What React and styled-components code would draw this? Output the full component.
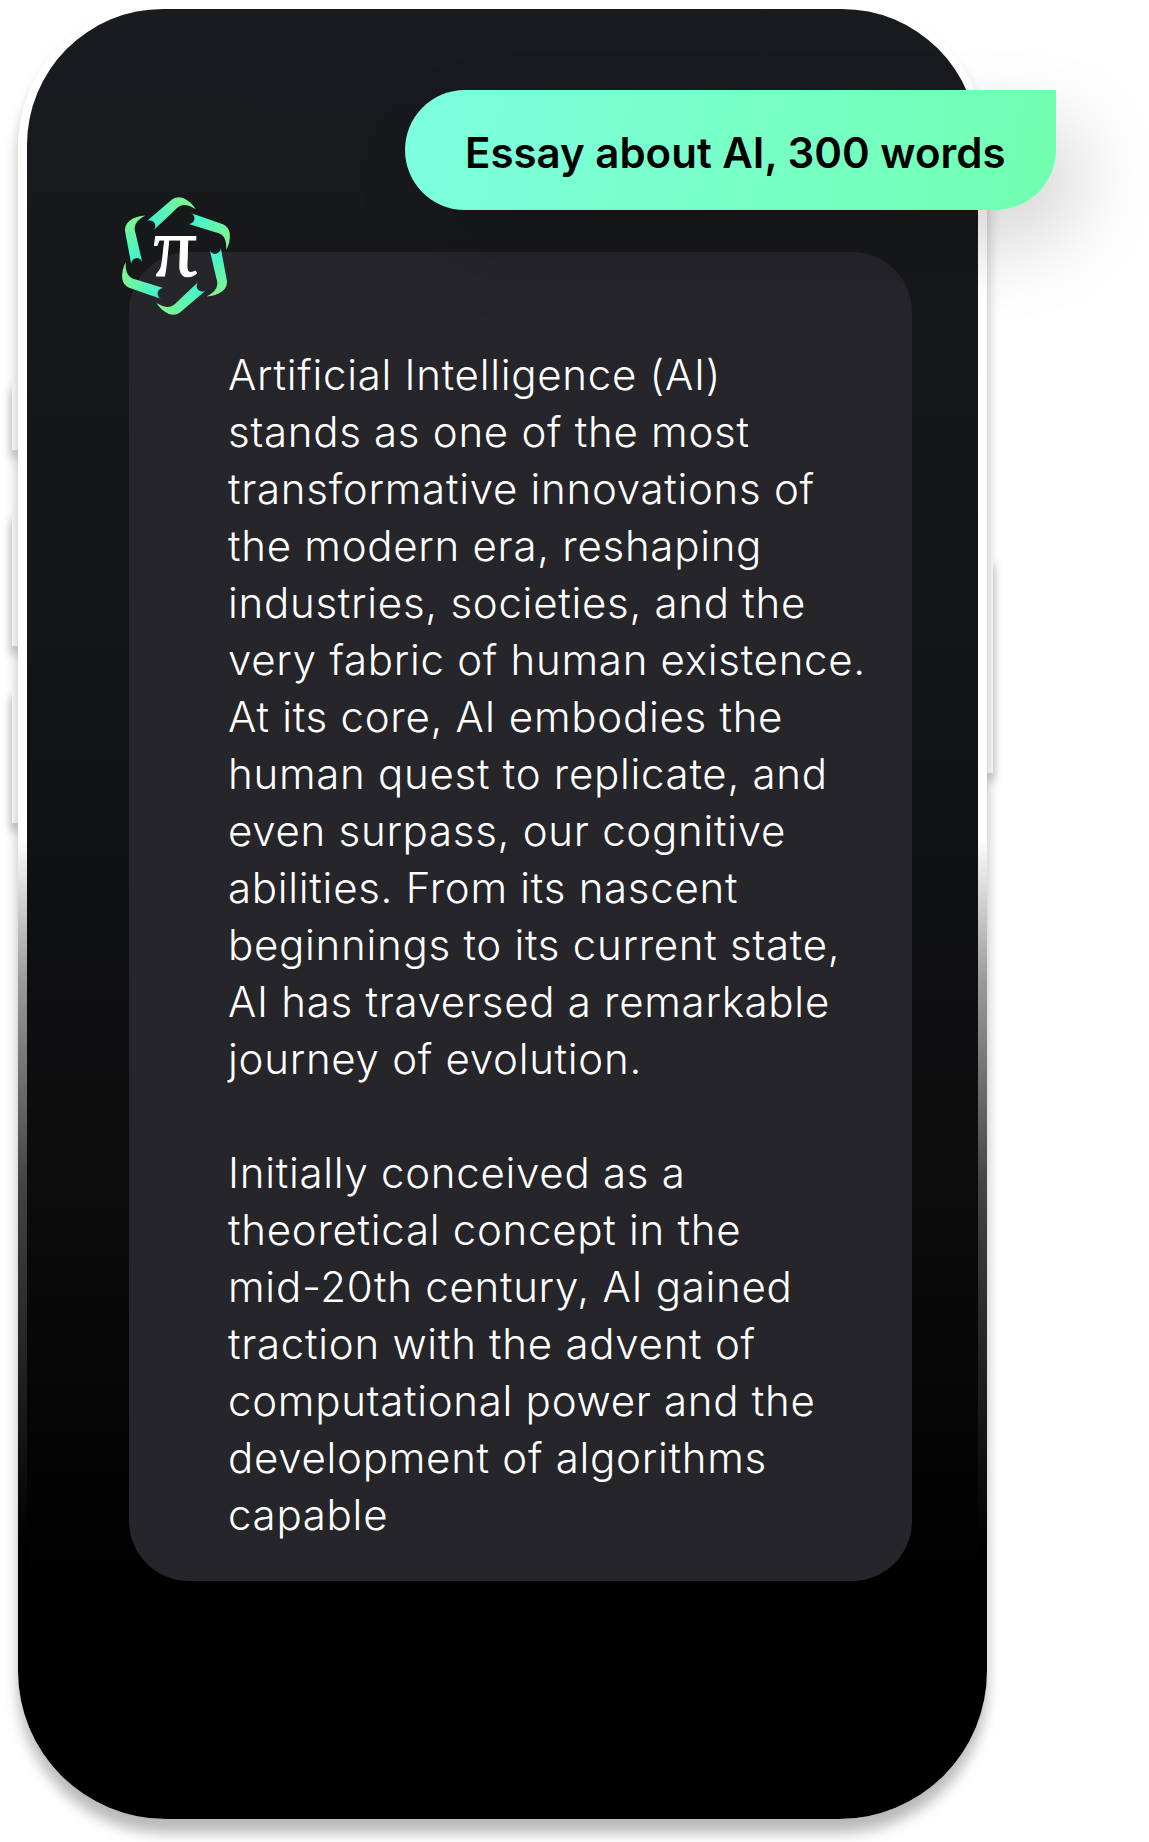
import React from 'react';
import styled, { createGlobalStyle } from 'styled-components';

const GlobalStyle = createGlobalStyle`
  html, body {
    margin: 0;
    padding: 0;
    background: #fff;
  }
`;

const Stage = styled.div`
  box-sizing: border-box;
  display: flex;
  align-items: flex-start;
  width: 1149px;
  height: 1842px;
  padding-left: 12px;
  overflow: hidden;
  font-family: Inter, "Liberation Sans", sans-serif;
`;

const ButtonRail = styled.div`
  display: flex;
  flex-direction: column;
  flex: none;
  width: 6px;
  padding-top: ${(p) => p.$top}px;
`;

const SideButton = styled.div`
  height: ${(p) => p.$height}px;
  margin-bottom: ${(p) => p.$gap || 0}px;
  background: #fff;
  box-shadow: 0 8px 10px rgba(0, 0, 0, 0.35);
`;

const Phone = styled.div`
  position: relative;
  z-index: 1;
  flex: none;
  box-sizing: border-box;
  width: 969px;
  height: 1819px;
  padding: 9px 9px 1px;
  border-radius: 148px;
  background: linear-gradient(180deg, #fff 0, #fff 46%, #999 54%, #444 65%, #000 85%);
  box-shadow: 0 14px 14px rgba(0, 0, 0, 0.28);
`;

const Screen = styled.div`
  box-sizing: border-box;
  height: 100%;
  padding: 243px 66px 0 102px;
  border-radius: 136px 136px 140px 140px;
  background: linear-gradient(180deg, #1a1b1e 0, #111214 45%, #0c0c0d 65%, #000 88%);
`;

const Card = styled.div`
  box-sizing: border-box;
  height: 1329px;
  padding: 94px 37px 0 99px;
  border-radius: 60px;
  background: #25252a;
`;

const Paragraph = styled.p`
  margin: 0 0 57px;
  color: #fff;
  font-size: 42px;
  line-height: 57px;
  font-weight: 300;
  letter-spacing: 0.72px;
`;

const Bubble = styled.div`
  position: absolute;
  top: 90px;
  left: 387px;
  box-sizing: border-box;
  display: flex;
  align-items: center;
  width: 651px;
  height: 120px;
  padding: 4px 0 0 60px;
  border-radius: 60px 0 60px 60px;
  background: linear-gradient(100deg, #7dffe0 0, #72ffb0 100%);
  box-shadow: 24px 36px 80px rgba(0, 0, 0, 0.16);
  color: #000;
  font-size: 42px;
  font-weight: 600;
`;

const Logo = styled.svg`
  position: absolute;
  top: 190px;
  left: 92px;
  width: 132px;
  height: 132px;
`;

const armAngles = [0, 60, 120, 180, 240, 300];

function PiLogo() {
  return (
    <Logo viewBox="-66 -66 132 132">
      <defs>
        <linearGradient id="arm" gradientUnits="userSpaceOnUse" x1="-26" y1="-30" x2="12" y2="-56">
          <stop offset="0" stopColor="#3df3d6" />
          <stop offset="1" stopColor="#80f58e" />
        </linearGradient>
      </defs>
      {armAngles.map((angle) => (
        <path
          key={angle}
          transform={`rotate(${angle})`}
          fill="url(#arm)"
          d="M-30-34.2 L-4-56.5 Q1-60 7-58 Q15-54.5 19.7-46.7 Q10-53 4-50 Q1-48.5-1-46 L-22.5-25.8 A5.5 5.5 0 0 0-30-34.2Z"
        />
      ))}
      <text
        transform="skewX(8)"
        x="-1"
        y="20"
        textAnchor="middle"
        fill="#fff"
        stroke="#fff"
        strokeWidth="1"
        fontFamily="'Liberation Serif', serif"
        fontStyle="italic"
        fontSize="86"
      >
        π
      </text>
    </Logo>
  );
}

export default function App() {
  return (
    <Stage>
      <GlobalStyle />
      <ButtonRail $top={380}>
        <SideButton $height={70} $gap={62} />
        <SideButton $height={134} $gap={43} />
        <SideButton $height={134} />
      </ButtonRail>
      <Phone>
        <Screen>
          <Card>
            <Paragraph>
              Artificial Intelligence (AI)<br />stands as one of the most transformative innovations of the modern era, reshaping industries, societies, and the very fabric of human existence. At its core, AI embodies the human quest to replicate, and even surpass, our cognitive abilities. From its nascent beginnings to its current state, AI has traversed a remarkable journey of evolution.
            </Paragraph>
            <Paragraph>
              Initially conceived as a theoretical concept in the<br />mid-20th century, AI gained traction with the advent of computational power and the development of algorithms capable
            </Paragraph>
          </Card>
        </Screen>
        <Bubble>Essay about AI, 300 words</Bubble>
        <PiLogo />
      </Phone>
      <ButtonRail $top={557}>
        <SideButton $height={216} />
      </ButtonRail>
    </Stage>
  );
}
